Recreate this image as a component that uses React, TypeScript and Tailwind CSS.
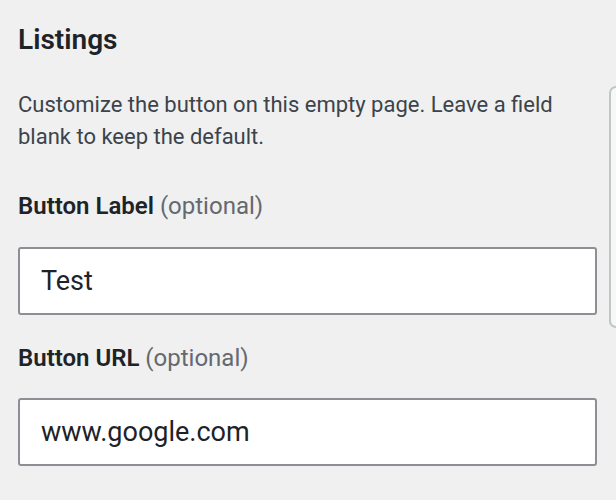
export default function App() {
  return (
    <div className="min-h-[500px] w-[616px] overflow-hidden bg-[#f0f0f0] font-['Roboto',sans-serif] text-[#1d2327]">
      <div className="flex pl-[18px]">
        <div className="w-[580px] shrink-0">
          <h2 className="pt-[22px] text-[28px] font-semibold leading-[36px] text-[#1d2327]">
            Listings
          </h2>
          <p className="mt-[31px] text-[22px] leading-[32px] text-[#3c434a]">
            Customize the button on this empty page. Leave a field blank to keep the default.
          </p>
          <label className="mt-[37px] block text-[24px] leading-[32px]">
            <span className="font-semibold text-[#1d2327]">Button Label</span>{" "}
            <span className="text-[#646970]">(optional)</span>
          </label>
          <input
            readOnly
            value="Test"
            className="mt-[25px] block h-[68px] w-[579px] rounded-[3px] border-2 border-[#8c8f94] bg-white pl-[21px] text-[27px] text-[#1d2327] outline-none"
          />
          <label className="mt-[27px] block text-[24px] leading-[32px]">
            <span className="font-semibold text-[#1d2327]">Button URL</span>{" "}
            <span className="text-[#646970]">(optional)</span>
          </label>
          <input
            readOnly
            value="www.google.com"
            className="mt-[24px] block h-[68px] w-[579px] rounded-[3px] border-2 border-[#8c8f94] bg-white pl-[21px] text-[27px] text-[#1d2327] outline-none"
          />
        </div>
        <div className="ml-[11px] mt-[86px] h-[242px] w-[20px] shrink-0 rounded-[7px] border-2 border-[#c3c4c7] bg-[#f6f7f7]" />
      </div>
    </div>
  );
}
